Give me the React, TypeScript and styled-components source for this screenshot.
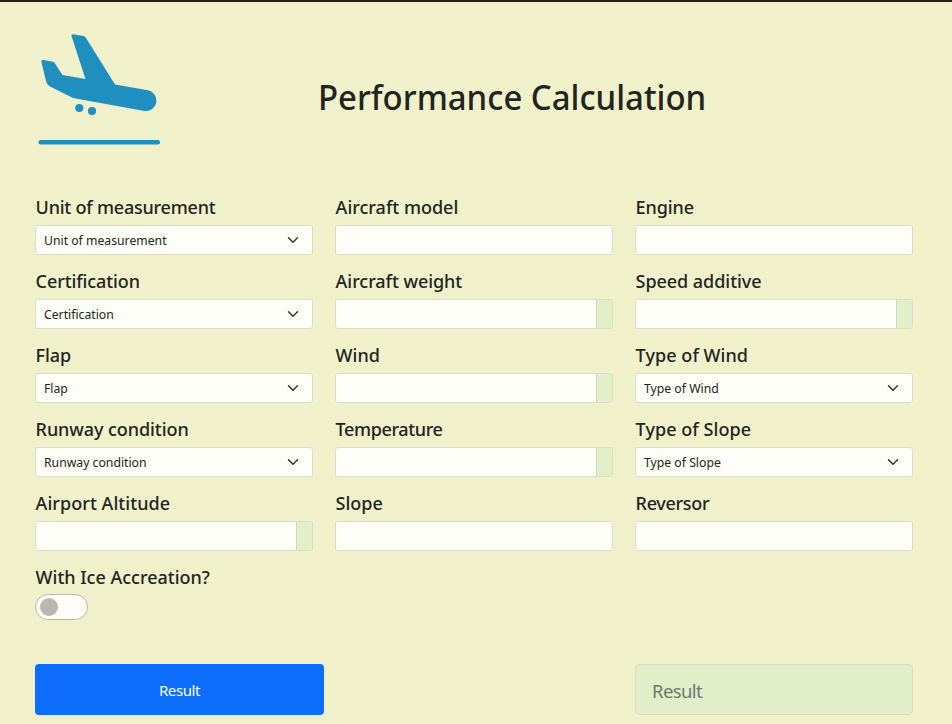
import React from "react";
import styled, { createGlobalStyle } from "styled-components";

const GlobalStyle = createGlobalStyle`
  *, *::before, *::after { box-sizing: border-box; }
  body {
    margin: 0;
    background: #f0f0cb;
    color: #212520;
    font-family: "Noto Sans", "Open Sans", sans-serif;
    overflow: hidden;
  }
`;

const Page = styled.main`
  height: 724px;
  border-top: 2px solid #222010;
  padding: 0 39px 0 35px;
  overflow: hidden;
`;

const Header = styled.header`
  display: grid;
  grid-template-columns: 128px 1fr;
  height: 194px;
  padding-top: 30px;
`;

const Logo = styled.svg`
  width: 128px;
  height: 116px;
  display: block;
`;

const Title = styled.h1`
  margin: 41px 0 0 155px;
  font-size: 35px;
  line-height: 48px;
  font-weight: 500;
  white-space: nowrap;
  transform: scaleX(0.94);
  transform-origin: left;
`;

const Fields = styled.form`
  display: grid;
  grid-template-columns: repeat(3, 278px);
  column-gap: 22px;
  grid-auto-rows: 74px;
`;

const Field = styled.div`
  display: flex;
  flex-direction: column;
`;

const Label = styled.label<{ $spacing?: number }>`
  height: 29px;
  padding-left: 0.6px;
  line-height: 23px;
  font-size: 18px;
  font-weight: 500;
  letter-spacing: ${(p) => p.$spacing ?? 0}px;
  white-space: nowrap;
`;

const Control = styled.div`
  display: flex;
  height: 30px;
  border: 1px solid #dcdcca;
  border-radius: 3px;
  background: #fefef8;
  overflow: hidden;
`;

const SelectBox = styled(Control)`
  align-items: center;
  justify-content: space-between;
  padding: 0 13px 0 8px;
  font-size: 13px;
`;

const Option = styled.span`
  transform: scaleX(0.94);
  transform-origin: left;
`;

const Arrow = styled.svg`
  width: 12px;
  height: 12px;
  margin-bottom: 1px;
`;

const Addon = styled.span`
  width: 16px;
  margin-left: auto;
  border-left: 1px solid #d0d6c4;
  background: #e3efc8;
`;

const Switch = styled.div`
  width: 53px;
  height: 26px;
  margin-top: -1px;
  padding: 3px 4px;
  border: 1px solid #b9b9ae;
  border-radius: 13px;
  background: #fefef8;
`;

const Knob = styled.div`
  width: 18px;
  height: 18px;
  border-radius: 50%;
  background: #b8b8b0;
`;

const Footer = styled.footer`
  display: flex;
  justify-content: space-between;
  margin-top: 24px;
`;

const SubmitButton = styled.button`
  width: 289px;
  height: 51px;
  border: 0;
  border-radius: 4px;
  background: #0d6efd;
  color: #fff;
  font: 400 15px "Noto Sans", sans-serif;
  letter-spacing: -0.4px;
`;

const ResultBox = styled.div`
  width: 278px;
  height: 51px;
  padding-left: 16px;
  border: 1px solid #d5dfc6;
  border-radius: 5px;
  background: #e2eec8;
  color: #6f7870;
  font-size: 18.5px;
  line-height: 52px;
  letter-spacing: -0.6px;
`;

type Kind = "select" | "input" | "addon";

const fields: { label: string; kind: Kind; spacing?: number }[] = [
  { label: "Unit of measurement", kind: "select", spacing: -0.22 },
  { label: "Aircraft model", kind: "input" },
  { label: "Engine", kind: "input", spacing: -0.1 },
  { label: "Certification", kind: "select", spacing: -0.1 },
  { label: "Aircraft weight", kind: "addon", spacing: -0.05 },
  { label: "Speed additive", kind: "addon", spacing: -0.05 },
  { label: "Flap", kind: "select", spacing: -0.1 },
  { label: "Wind", kind: "addon" },
  { label: "Type of Wind", kind: "select", spacing: 0.06 },
  { label: "Runway condition", kind: "select", spacing: -0.07 },
  { label: "Temperature", kind: "addon", spacing: -0.38 },
  { label: "Type of Slope", kind: "select", spacing: 0.05 },
  { label: "Airport Altitude", kind: "addon", spacing: 0.05 },
  { label: "Slope", kind: "input" },
  { label: "Reversor", kind: "input", spacing: -0.3 },
];

const Chevron = () => (
  <Arrow viewBox="0 0 16 16" fill="none" stroke="#343a36" strokeWidth="2" strokeLinecap="round" strokeLinejoin="round">
    <path d="m2 5 6 6 6-6" />
  </Arrow>
);

export default function App() {
  return (
    <>
      <GlobalStyle />
      <Page>
        <Header>
          <Logo viewBox="35 32 128 116" fill="#1f8fc0">
            <path d="M71.5 36Q71 34 73 34.2L83.500 36Q85 36.400 86 38L115 84.500L148 90.300A10.500 10.500 0 0 1 144.500 111L73 98L51 87Q47 85 46 81L41.300 61.500Q41 59.800 43 60L53 61.700Q54 62 55 63.500L62.500 75L85.500 79Z" />
            <circle cx="79.300" cy="108" r="4.100" />
            <circle cx="92" cy="111" r="4.100" />
            <rect x="38.500" y="140" width="121.500" height="4.500" rx="2.200" />
          </Logo>
          <Title>Performance Calculation</Title>
        </Header>
        <Fields>
          {fields.map(({ label, kind, spacing }) => (
            <Field key={label}>
              <Label $spacing={spacing}>{label}</Label>
              {kind === "select" ? (
                <SelectBox><Option>{label}</Option><Chevron /></SelectBox>
              ) : (
                <Control>{kind === "addon" && <Addon />}</Control>
              )}
            </Field>
          ))}
          <Field>
            <Label>With Ice Accreation?</Label>
            <Switch><Knob /></Switch>
          </Field>
        </Fields>
        <Footer>
          <SubmitButton>Result</SubmitButton>
          <ResultBox>Result</ResultBox>
        </Footer>
      </Page>
    </>
  );
}
